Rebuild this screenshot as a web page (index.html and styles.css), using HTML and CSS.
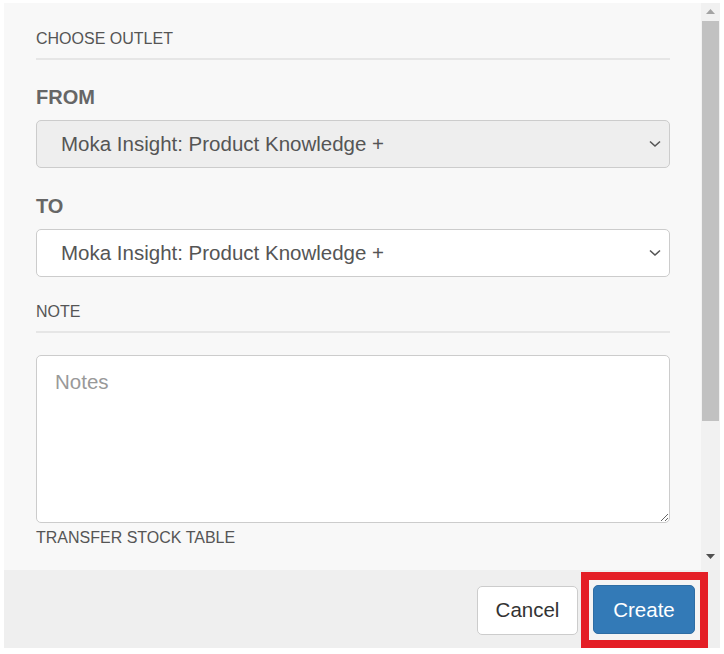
FILE: index.html
```html
<!DOCTYPE html>
<html lang="en">

<head>
    <meta charset="UTF-8">
    <title>Transfer Stock</title>
    <link rel="stylesheet" href="styles.css">
</head>

<body>

    <div class="modal">
        <div class="modal-main">
            <div class="modal-body">
                <div class="section-title">Choose Outlet</div>

                <label class="field-label">From</label>
                <div class="select select-disabled">
                    <span>Moka Insight: Product Knowledge +</span>
                    <svg class="chevron" width="12" height="8" viewBox="0 0 12 8">
                        <path d="M1 1.5 L6 6 L11 1.5" fill="none" stroke="#555" stroke-width="1.6" />
                    </svg>
                </div>

                <label class="field-label label-to">To</label>
                <div class="select">
                    <span>Moka Insight: Product Knowledge +</span>
                    <svg class="chevron" width="12" height="8" viewBox="0 0 12 8">
                        <path d="M1 1.5 L6 6 L11 1.5" fill="none" stroke="#555" stroke-width="1.6" />
                    </svg>
                </div>

                <div class="section-title note-title">Note</div>
                <textarea class="notes" placeholder="Notes"></textarea>

                <div class="section-title table-title">Transfer Stock Table</div>
            </div>

            <div class="scrollbar">
                <svg class="arrow" width="9" height="6" viewBox="0 0 9 6">
                    <path d="M0 5 L4.5 0 L9 5 Z" fill="#a3a3a3" />
                </svg>
                <div class="thumb"></div>
                <div class="track-rest"></div>
                <svg class="arrow arrow-down" width="9" height="6" viewBox="0 0 9 6">
                    <path d="M0 0 L9 0 L4.5 5 Z" fill="#505050" />
                </svg>
            </div>
        </div>

        <div class="modal-footer">
            <button class="btn btn-default">Cancel</button>
            <span class="highlight">
                <button class="btn btn-primary">Create</button>
            </span>
        </div>
    </div>

</body>

</html>
```

FILE: styles.css
```css
body {
    margin: 0;
    background-color: #fff;
    font-family: "Liberation Sans", Arial, sans-serif;
}

.modal {
    width: 716px;
    margin: 3px 0 0 4px;
}

.modal-main {
    display: flex;
    height: 567px;
    background-color: #f8f8f8;
}

.modal-body {
    flex: 1;
    overflow: hidden;
    padding: 27px 31px 0 32px;
}

.section-title {
    font-size: 16px;
    line-height: 18px;
    color: #555;
    text-transform: uppercase;
    padding-bottom: 10px;
    border-bottom: 2px solid #e6e6e6;
}

.field-label {
    display: block;
    margin: 26px 0 12px;
    font-size: 20px;
    line-height: 22px;
    font-weight: bold;
    color: #666;
    text-transform: uppercase;
}

.label-to {
    margin-top: 27px;
}

.select {
    display: flex;
    align-items: center;
    justify-content: space-between;
    height: 46px;
    padding: 0 8px 0 24px;
    border: 1px solid #ccc;
    border-radius: 5px;
    background-color: #fff;
    font-size: 20.5px;
    color: #555;
}

.select-disabled {
    background-color: #eee;
}

.note-title {
    margin-top: 26px;
}

.notes {
    display: block;
    box-sizing: border-box;
    width: 100%;
    height: 168px;
    margin-top: 22px;
    padding: 14px 18px;
    border: 1px solid #ccc;
    border-radius: 5px;
    background-color: #fff;
    font-family: "Liberation Sans", Arial, sans-serif;
    font-size: 20.5px;
    color: #555;
}

.notes::placeholder {
    color: #999;
}

.table-title {
    margin-top: 6px;
    border-bottom: none;
}

.scrollbar {
    display: flex;
    flex-direction: column;
    align-items: center;
    width: 19px;
    background-color: #f1f1f1;
}

.arrow {
    margin: 6px 0;
}

.arrow-down {
    margin-bottom: 10px;
}

.thumb {
    width: 17px;
    height: 400px;
    background-color: #c1c1c1;
}

.track-rest {
    flex: 1;
}

.modal-footer {
    display: flex;
    align-items: center;
    justify-content: flex-end;
    height: 78px;
    padding: 2px 12px 0 0;
    box-sizing: border-box;
    background-color: #efefef;
}

.btn {
    height: 49px;
    padding: 0 17px;
    border-radius: 5px;
    font-family: "Liberation Sans", Arial, sans-serif;
    font-size: 20.5px;
    cursor: pointer;
}

.btn-default {
    width: 101px;
    border: 1px solid #ccc;
    background-color: #fff;
    color: #333;
}

.btn-primary {
    display: block;
    width: 102px;
    border: 1px solid #2e6da4;
    background-color: #337ab7;
    color: #fff;
}

.highlight {
    display: block;
    margin-left: 3px;
    padding: 5px 5px 6px 4px;
    border: 8px solid #e41e26;
    background-color: #f4f4f4;
}
```
